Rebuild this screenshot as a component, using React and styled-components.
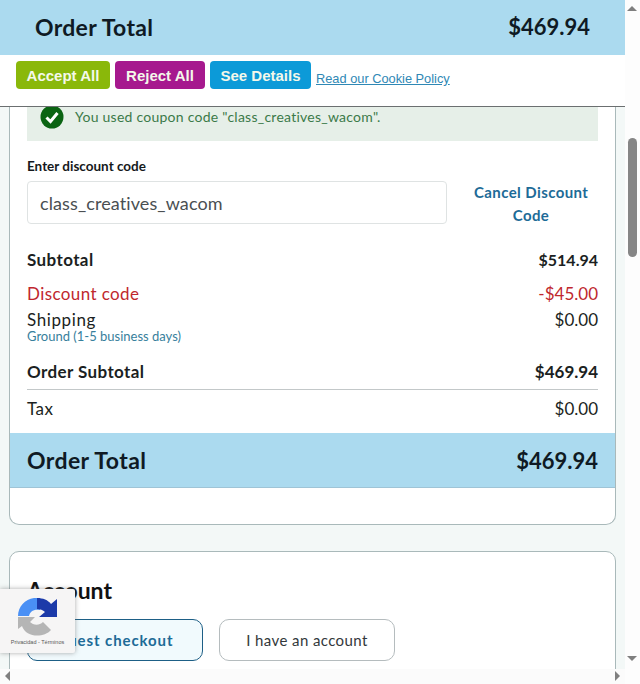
import React from "react";
import styled, { createGlobalStyle } from "styled-components";

const Global = createGlobalStyle`
  html, body {
    margin: 0;
    padding: 0;
    height: 684px;
    overflow: hidden;
    background: #fff;
  }
  * { box-sizing: border-box; }
`;

const Screen = styled.div`
  position: relative;
  width: 640px;
  height: 684px;
  display: grid;
  grid-template-columns: 625px 15px;
  grid-template-rows: 669px 15px;
  overflow: hidden;
  font-family: Lato, "Open Sans", sans-serif;
  color: #15191c;
`;

const Main = styled.main`
  grid-column: 1;
  grid-row: 1;
  display: flex;
  flex-direction: column;
  overflow: hidden;
  background: #f3f8f7;
`;

const TopTotal = styled.header`
  flex: none;
  height: 55px;
  padding: 0 35px 2px;
  display: flex;
  align-items: center;
  justify-content: space-between;
  background: #abdaef;
  font-size: 23px;
  font-weight: 700;
  letter-spacing: 0.3px;
  color: #0f1a24;
`;

const TotalAmount = styled.span`
  font-size: 22px;
  letter-spacing: 0;
`;

const CookieBar = styled.div`
  flex: none;
  height: 52px;
  padding: 6px 0 0 16px;
  display: flex;
  align-items: flex-start;
  gap: 5px;
  background: #fff;
  border-bottom: 1px solid #6b6f70;
  font-family: "Liberation Sans", Arial, sans-serif;
`;

const CookieButton = styled.button`
  height: 28px;
  width: ${(p) => p.$w}px;
  padding: 0;
  border: 0;
  border-radius: 4px;
  background: ${(p) => p.$bg};
  color: #f4f8ea;
  font: bold 15px "Liberation Sans", Arial, sans-serif;
`;

const CookieLink = styled.a`
  margin-top: 10px;
  font-size: 12.8px;
  color: #2f88b5;
  text-decoration: underline;
`;

const Content = styled.div`
  flex: 1;
  min-height: 0;
  padding: 0 9px;
  overflow: hidden;
`;

const Card = styled.section`
  background: #fff;
  border: 1px solid #a9b9ba;
  border-top: ${(p) => (p.$open ? 0 : "1px solid #a9b9ba")};
  border-radius: ${(p) => (p.$open ? "0 0 10px 10px" : "10px 10px 0 0")};
`;

const SummaryCard = styled(Card)`
  height: 418px;
  margin-bottom: 26px;
`;

const Inner = styled.div`
  padding: 0 17px;
`;

const Alert = styled.div`
  height: 34px;
  padding: 0 0 15px 13px;
  display: flex;
  align-items: center;
  gap: 11px;
  background: #e6efe8;
  font-size: 14px;
  letter-spacing: 0.25px;
  color: #3b7a48;
`;

const Label = styled.label`
  display: block;
  margin-top: 18px;
  height: 15px;
  line-height: 15px;
  font-size: 13.5px;
  font-weight: 700;
`;

const CodeRow = styled.div`
  margin-top: 7px;
  display: flex;
  align-items: flex-start;
`;

const CodeInput = styled.div`
  width: 420px;
  height: 43px;
  padding: 0 12px;
  display: flex;
  align-items: center;
  border: 1px solid #dfe3e3;
  border-radius: 4px;
  font-size: 18px;
  letter-spacing: 0.1px;
  color: #4a4f52;
`;

const CancelLink = styled.a`
  margin-left: 27px;
  width: 114px;
  white-space: nowrap;
  text-align: center;
  font-size: 15px;
  font-weight: 700;
  line-height: 23px;
  letter-spacing: 0.4px;
  color: #1d6b97;
`;

const Row = styled.div`
  display: flex;
  justify-content: space-between;
  align-items: center;
  height: ${(p) => p.$h || 24}px;
  margin-top: ${(p) => p.$mt || 0}px;
  font-size: 17px;
  font-weight: ${(p) => (p.$bold ? 700 : 400)};
  letter-spacing: ${(p) => p.$ls || 0}px;
  color: ${(p) => p.$color || "#1b1f22"};
`;

const Amount = styled.span`
  font-size: ${(p) => p.$size || 17}px;
  letter-spacing: 0;
`;

const ShipNote = styled.div`
  height: 13px;
  line-height: 13px;
  font-size: 13px;
  color: #37809c;
`;

const Rule = styled.div`
  margin-top: 6px;
  height: 1px;
  background: #c3c8c9;
`;

const TotalBar = styled.div`
  height: 55px;
  margin-top: 13px;
  padding: 0 17px;
  display: flex;
  align-items: center;
  justify-content: space-between;
  background: #abdaef;
  border-bottom: 1px solid #9fc4d6;
  font-size: 23px;
  font-weight: 700;
  letter-spacing: 0.4px;
  color: #0f1a24;
`;

const AccountCard = styled(Card)`
  height: 200px;
  padding: 25px 17px 0;
`;

const AccountTitle = styled.h2`
  margin: 0;
  height: 26px;
  line-height: 26px;
  font-size: 23px;
  font-weight: 700;
  color: #111;
`;

const ButtonRow = styled.div`
  margin-top: 16px;
  display: flex;
  gap: 16px;
`;

const AccountButton = styled.button`
  width: 176px;
  height: 42px;
  border-radius: 10px;
  border: 1px solid ${(p) => (p.$active ? "#1d5f86" : "#b5bcbe")};
  background: ${(p) => (p.$active ? "#f1fafd" : "#fff")};
  color: ${(p) => (p.$active ? "#1d6b97" : "#33383b")};
  font-family: Lato, sans-serif;
  font-size: 15px;
  font-weight: ${(p) => (p.$active ? 700 : 400)};
  letter-spacing: ${(p) => (p.$active ? 0.9 : 0.4)}px;
`;

const VScroll = styled.div`
  position: relative;
  grid-column: 2;
  grid-row: 1 / 3;
  background: #fdfdfd;
  display: flex;
  flex-direction: column;
  align-items: center;
`;

const VThumb = styled.div`
  width: 9px;
  height: 119px;
  margin-top: 138px;
  border-radius: 5px;
  background: #868686;
`;

const Arrow = styled.div`
  position: absolute;
  width: 0;
  height: 0;
  border: 5px solid transparent;
  ${(p) => p.$css}
`;

const HScroll = styled.div`
  position: relative;
  grid-column: 1;
  grid-row: 2;
  background: #fbfbfb;
`;

const Recaptcha = styled.aside`
  position: absolute;
  left: 0;
  top: 589px;
  width: 75px;
  height: 64px;
  display: flex;
  flex-direction: column;
  align-items: center;
  padding: 8px 0 0 0;
  background: #f6f5f5;
  box-shadow: 0 0 5px rgba(100, 100, 100, 0.55);
  border-radius: 0 2px 2px 0;
`;

const RecaptchaText = styled.span`
  margin-top: 2px;
  font: 5.5px "Liberation Sans", Arial, sans-serif;
  color: #555;
  white-space: nowrap;
`;

function CheckIcon() {
  return (
    <svg width="24" height="24" viewBox="0 0 24 24" style={{ flex: "none" }}>
      <circle cx="12" cy="12" r="11.5" fill="#0b6413" />
      <path d="M6.5 12.5l4 4 7-8.5" fill="none" stroke="#fff" strokeWidth="3" />
    </svg>
  );
}

function RecaptchaLogo() {
  return (
    <svg width="42" height="40" viewBox="0 0 42 40">
      <path d="M1 19C1 10 8 2 17 1l6 0 0 12C16 12 13 15 12 19z" fill="#4a90f5" />
      <path d="M20 1C26 1 31 3 34 7l6-5v18H22l6-5c-2-2-5-3-8-3z" fill="#1c3aa9" />
      <path d="M1 20h17l-5 5c3 3 9 4 13 0l8 8C27 41 9 41 5 29l-4 3z" fill="#b5b5b5" />
    </svg>
  );
}

export default function App() {
  return (
    <Screen>
      <Global />
      <Main>
        <TopTotal>
          <span>Order Total</span>
          <TotalAmount>$469.94</TotalAmount>
        </TopTotal>
        <CookieBar>
          <CookieButton $w={94} $bg="#8ab80a">Accept All</CookieButton>
          <CookieButton $w={90} $bg="#a6198e">Reject All</CookieButton>
          <CookieButton $w={101} $bg="#0c9ad8">See Details</CookieButton>
          <CookieLink>Read our Cookie Policy</CookieLink>
        </CookieBar>
        <Content>
          <SummaryCard $open>
            <Inner>
              <Alert>
                <CheckIcon />
                <span>You used coupon code "class_creatives_wacom".</span>
              </Alert>
              <Label>Enter discount code</Label>
              <CodeRow>
                <CodeInput>class_creatives_wacom</CodeInput>
                <CancelLink>Cancel Discount<br />Code</CancelLink>
              </CodeRow>
              <Row $bold $mt={20} $ls={0.4}>
                <span>Subtotal</span>
                <Amount $size={16}>$514.94</Amount>
              </Row>
              <Row $mt={10} $ls={0.4} $color="#c0272d">
                <span>Discount code</span>
                <Amount>-$45.00</Amount>
              </Row>
              <Row $mt={3} $h={22} $ls={0.6}>
                <span>Shipping</span>
                <Amount>$0.00</Amount>
              </Row>
              <ShipNote>Ground (1-5 business days)</ShipNote>
              <Row $bold $mt={16} $ls={0.4}>
                <span>Order Subtotal</span>
                <Amount>$469.94</Amount>
              </Row>
              <Rule />
              <Row $mt={6} $ls={0.5}>
                <span>Tax</span>
                <Amount>$0.00</Amount>
              </Row>
            </Inner>
            <TotalBar>
              <span>Order Total</span>
              <TotalAmount>$469.94</TotalAmount>
            </TotalBar>
          </SummaryCard>
          <AccountCard>
            <AccountTitle>Account</AccountTitle>
            <ButtonRow>
              <AccountButton $active>Guest checkout</AccountButton>
              <AccountButton>I have an account</AccountButton>
            </ButtonRow>
          </AccountCard>
        </Content>
      </Main>
      <VScroll>
        <Arrow $css="top: 1px; left: 2px; border-bottom-color: #7f7f7f;" />
        <VThumb />
        <Arrow $css="top: 656px; left: 2px; border-top-color: #7f7f7f;" />
      </VScroll>
      <HScroll>
        <Arrow $css="top: 2px; left: 0; border-right-color: #7f7f7f;" />
        <Arrow $css="top: 2px; right: 0; border-left-color: #7f7f7f;" />
      </HScroll>
      <Recaptcha>
        <RecaptchaLogo />
        <RecaptchaText>Privacidad - Términos</RecaptchaText>
      </Recaptcha>
    </Screen>
  );
}
